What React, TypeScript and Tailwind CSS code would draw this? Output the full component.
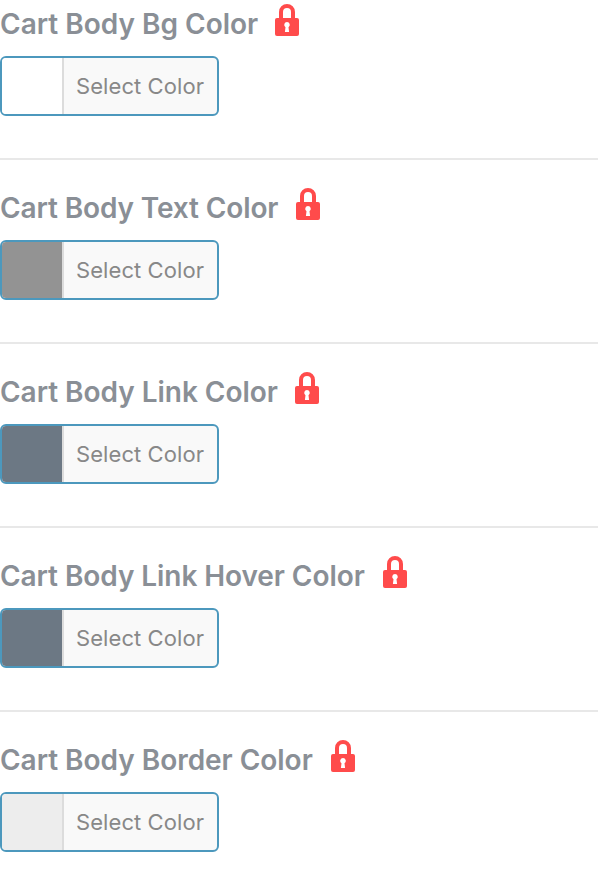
import React from "react";

type Setting = { label: string; color: string; heading: string };

const settings: Setting[] = [
  { label: "Cart Body Bg Color", color: "bg-white", heading: "w-[257px]" },
  { label: "Cart Body Text Color", color: "bg-[#939393]", heading: "w-[278px] tracking-[-0.12px]" },
  { label: "Cart Body Link Color", color: "bg-[#6c7884]", heading: "w-[277px] tracking-[-0.03px]" },
  { label: "Cart Body Link Hover Color", color: "bg-[#6c7884]", heading: "w-[365px] tracking-[-0.07px]" },
  { label: "Cart Body Border Color", color: "bg-[#ededed]", heading: "w-[313px] tracking-[-0.03px]" },
];

function Lock() {
  return (
    <svg width="24" height="32" viewBox="0 0 24 32" className="block shrink-0">
      <path d="M6 15V8a6 6 0 0 1 12 0v7" fill="none" stroke="#ff4b4b" strokeWidth="4" />
      <rect y="14" width="24" height="18" rx="2" fill="#ff4b4b" />
      <path d="M12 18a2.9 2.9 0 0 0-1.5 5.3L9.9 28h4.2l-.6-4.7A2.9 2.9 0 0 0 12 18Z" fill="white" />
    </svg>
  );
}

export default function App() {
  return (
    <main className="h-[889px] w-[598px] overflow-hidden bg-white font-['Inter',sans-serif]">
      {settings.map((s) => (
        <section key={s.label} className="h-[184px] border-b-2 border-[#e8e8e8] pt-6 first:h-40 first:pt-0 last:border-0">
          <div className="flex h-14 items-start gap-[18px]">
            <h2 className={`${s.heading} shrink-0 whitespace-nowrap pt-1 text-[28px] leading-10 font-semibold text-[#8a8f96]`}>{s.label}</h2>
            <span className="pt-1"><Lock /></span>
          </div>
          <button className="flex h-[60px] w-[219px] overflow-hidden rounded-md border-2 border-[#4c98bd] bg-[#f9f9f9]">
            <span className={`h-full w-[60px] shrink-0 ${s.color}`} />
            <span className="h-full flex-1 whitespace-nowrap border-l-2 border-[#dcdcdc] pl-3 text-left text-[22px] leading-14 tracking-[0.08px] text-[#888]">Select Color</span>
          </button>
        </section>
      ))}
    </main>
  );
}
